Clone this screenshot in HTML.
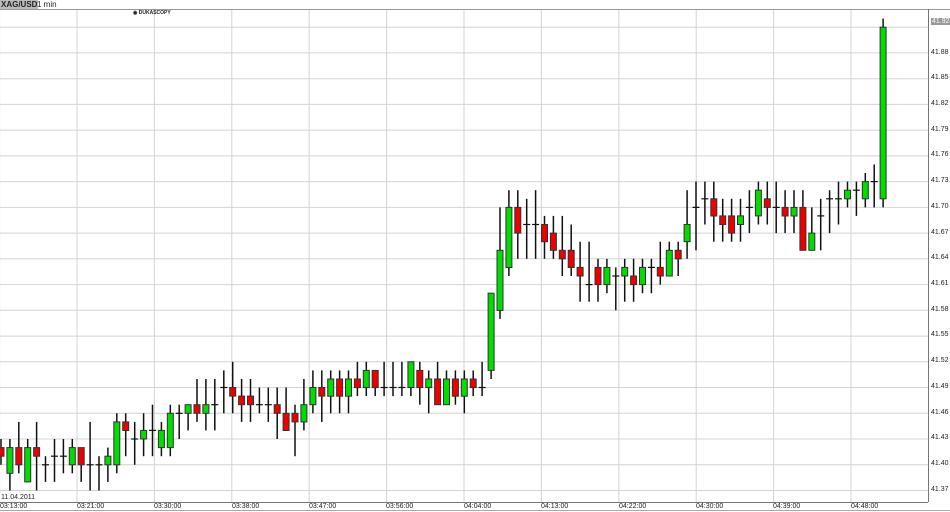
<!DOCTYPE html>
<html><head><meta charset="utf-8"><style>
body{margin:0;width:950px;height:512px;overflow:hidden;background:#fff;font-family:"Liberation Sans",sans-serif;}
svg{position:absolute;left:0;top:0}
.t{position:absolute;font-size:7px;color:#222;white-space:nowrap}
.xl{top:503px}
.yl{left:931px}
</style></head><body>
<svg id="s" width="950" height="512" viewBox="0 0 950 512"></svg>
<div class="t" style="left:0;top:0;height:9px;line-height:9px;background:#bbb;font-weight:bold;padding:0 1px;font-size:8px">XAG/USD</div>
<div class="t" style="left:37px;top:0;line-height:9px;font-size:8px">1 min</div>
<div class="t" style="left:133px;top:10px;font-size:5px;font-weight:bold">◉ DUKASCOPY</div>
<div class="t" style="left:1px;top:494px">11.04.2011</div>
<div class="t xl" style="left:0">03:13:00</div>
<div class="t xl" style="left:77px">03:21:00</div>
<div class="t xl" style="left:154px">03:30:00</div>
<div class="t xl" style="left:232px">03:38:00</div>
<div class="t xl" style="left:309px">03:47:00</div>
<div class="t xl" style="left:386px">03:56:00</div>
<div class="t xl" style="left:464px">04:04:00</div>
<div class="t xl" style="left:541px">04:13:00</div>
<div class="t xl" style="left:619px">04:22:00</div>
<div class="t xl" style="left:696px">04:30:00</div>
<div class="t xl" style="left:773px">04:39:00</div>
<div class="t xl" style="left:851px">04:48:00</div>
<div class="t yl" style="top:486px">41.37</div>
<div class="t yl" style="top:460px">41.40</div>
<div class="t yl" style="top:434px">41.43</div>
<div class="t yl" style="top:409px">41.46</div>
<div class="t yl" style="top:383px">41.49</div>
<div class="t yl" style="top:357px">41.52</div>
<div class="t yl" style="top:331px">41.55</div>
<div class="t yl" style="top:306px">41.58</div>
<div class="t yl" style="top:280px">41.61</div>
<div class="t yl" style="top:254px">41.64</div>
<div class="t yl" style="top:229px">41.67</div>
<div class="t yl" style="top:203px">41.70</div>
<div class="t yl" style="top:177px">41.73</div>
<div class="t yl" style="top:151px">41.76</div>
<div class="t yl" style="top:126px">41.79</div>
<div class="t yl" style="top:100px">41.82</div>
<div class="t yl" style="top:74px">41.85</div>
<div class="t yl" style="top:49px">41.88</div>
<div class="t yl" style="top:18px;background:#999;color:#fff;padding:0 1px">41.92</div>
<script>
(function(){
var s=document.getElementById('s'),h='';
function Y(t){return 490.5-t*8.58;}
for(var t=0;t<=54;t+=3){var y=Y(t).toFixed(1);h+='<line x1="0" x2="928" y1="'+y+'" y2="'+y+'" stroke="#d4d4d4" stroke-width="1"/>';}
for(var k=-1;k<11;k++){var x=(77+k*77.4).toFixed(1);h+='<line x1="'+x+'" x2="'+x+'" y1="9" y2="502" stroke="#d4d4d4" stroke-width="1"/>';}
h+='<line x1="0" x2="950" y1="9.5" y2="9.5" stroke="#999"/>';
h+='<line x1="928.5" x2="928.5" y1="9" y2="502" stroke="#777"/>';
h+='<line x1="0" x2="928" y1="502.5" y2="502.5" stroke="#777"/>';
h+='<line x1="0" x2="950" y1="510.5" y2="510.5" stroke="#aaa"/>';
var d=[[5,6,3,4],[2,6,0,5],[5,8,2,3],[1,6,1,5],[5,8,0,4],[3,4,1,3],[4,6,1,4],[4,6,2,4],[3,6,2,5],[5,5,1,3],
[3,8,0,3],[3,4,0,3],[3,5,1,4],[3,9,2,8],[8,9,4,7],[6,8,3,6],[6,9,4,7],[7,10,4,7],[5,8,4,7],[5,10,4,9],
[9,10,6,9],[9,10,7,10],[10,13,8,9],[9,13,7,10],[10,13,7,10],[12,14,9,12],[12,15,9,11],[11,13,8,10],[11,13,8,10],[10,12,9,10],
[10,12,8,10],[10,12,6,9],[9,12,7,7],[9,10,4,8],[8,13,7,10],[10,14,9,12],[12,14,8,11],[11,14,9,13],[13,14,9,11],[11,14,9,13],
[13,15,11,12],[12,15,11,14],[14,14,11,12],[12,15,11,12],[12,15,11,12],[12,15,11,12],[12,15,11,15],[14,15,10,12],[12,14,9,13],[13,15,10,10],
[10,14,10,13],[13,14,10,11],[11,14,9,13],[13,14,11,12],[12,15,11,12],[14,23,13,23],[21,33,20,28],[26,35,25,33],[33,35,27,30],[31,34,27,31],
[31,35,27,31],[31,32,27,29],[30,32,27,28],[28,32,25,27],[28,31,25,26],[26,29,22,25],[24,29,22,24],[26,27,22,24],[24,27,23,26],[25,26,21,25],
[25,27,22,26],[25,27,22,24],[24,27,23,26],[26,27,23,26],[26,29,24,25],[25,29,25,28],[28,29,25,27],[29,35,27,31],[33,36,28,33],[34,36,31,34],
[34,36,29,32],[32,34,29,31],[32,34,29,30],[31,34,29,32],[33,35,30,33],[32,36,31,35],[34,36,31,33],[33,36,30,33],[33,35,30,32],[32,35,30,33],
[33,35,28,28],[28,33,28,30],[32,34,28,32],[34,35,30,34],[34,36,31,34],[34,36,33,35],[35,36,32,35],[34,37,33,36],[36,38,33,36],[34,55,33,54]];
for(var i=0;i<d.length;i++){var c=d[i],x=1+i*8.91,o=c[0],hi=c[1],lo=c[2],cl=c[3];
h+='<line x1="'+x.toFixed(1)+'" x2="'+x.toFixed(1)+'" y1="'+Y(hi).toFixed(1)+'" y2="'+Y(lo).toFixed(1)+'" stroke="#111" stroke-width="1.5"/>';
if(o==cl){h+='<line x1="'+(x-3.5).toFixed(1)+'" x2="'+(x+3.5).toFixed(1)+'" y1="'+Y(o).toFixed(1)+'" y2="'+Y(o).toFixed(1)+'" stroke="#111" stroke-width="1.2"/>';}
else{var tp=Y(Math.max(o,cl)),bt=Y(Math.min(o,cl));
h+='<rect x="'+(x-3).toFixed(1)+'" y="'+tp.toFixed(1)+'" width="6" height="'+(bt-tp).toFixed(1)+'" fill="'+(cl>o?'#00dd00':'#ee0000')+'" stroke="#333" stroke-width="1"/>';}}
s.innerHTML=h;
})();
</script>
</body></html>
